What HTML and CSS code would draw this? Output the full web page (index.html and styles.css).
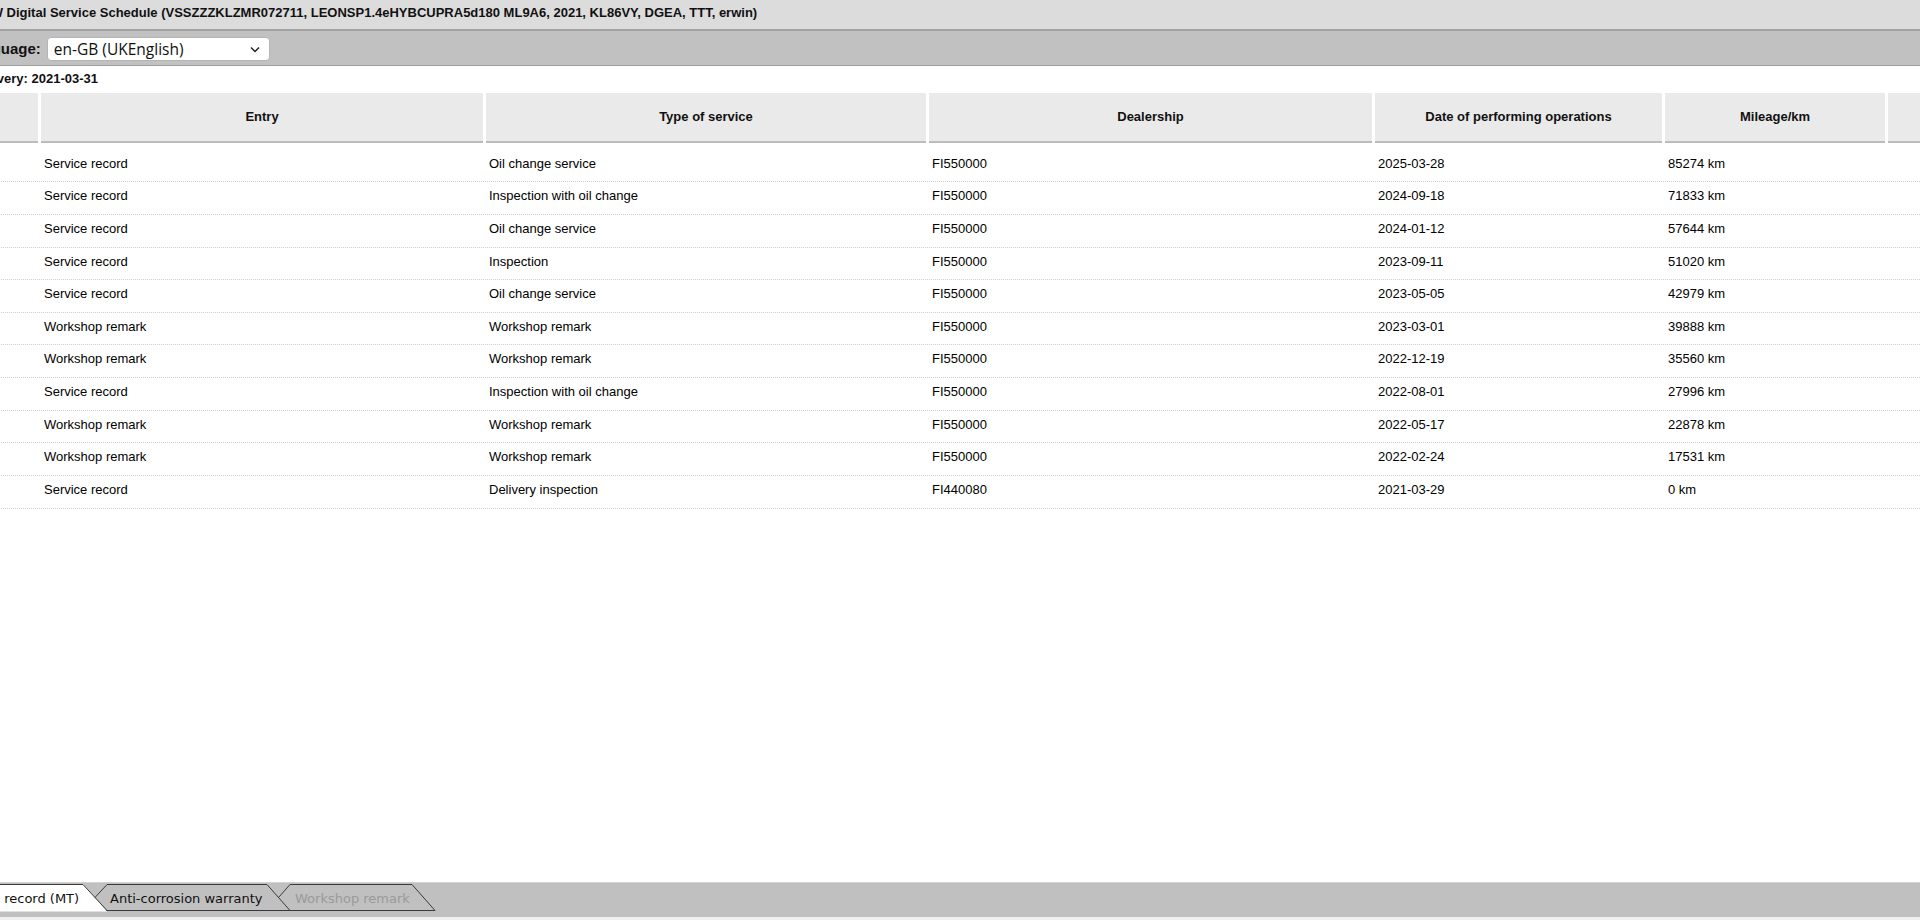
FILE: index.html
```html
<!DOCTYPE html>
<html lang="en">
<head>
    <meta charset="UTF-8">
    <meta name="viewport" content="width=device-width, initial-scale=1.0">
    <title>VW Digital Service Schedule</title>
    <link rel="stylesheet" href="styles.css">
</head>
<body>
    <div class="page">
        <div class="title-bar">VW Digital Service Schedule (VSSZZZKLZMR072711, LEONSP1.4eHYBCUPRA5d180 ML9A6, 2021, KL86VY, DGEA, TTT, erwin)</div>

        <div class="lang-bar">
            <span class="lang-label">Language:</span>
            <div class="select">
                <span>en-GB (UKEnglish)</span>
                <svg width="10" height="7" viewBox="0 0 10 7"><path d="M1 1.5 L5 5.5 L9 1.5" fill="none" stroke="#222" stroke-width="1.5"/></svg>
            </div>
        </div>

        <div class="delivery">Delivery: 2021-03-31</div>

        <div class="main">
            <div class="row head">
                <div></div>
                <div>Entry</div>
                <div>Type of service</div>
                <div>Dealership</div>
                <div>Date of performing operations</div>
                <div>Mileage/km</div>
                <div></div>
            </div>

            <div class="rows">
                <div class="row"><div></div><div>Service record</div><div>Oil change service</div><div>FI550000</div><div>2025-03-28</div><div>85274 km</div><div></div></div>
                <div class="row"><div></div><div>Service record</div><div>Inspection with oil change</div><div>FI550000</div><div>2024-09-18</div><div>71833 km</div><div></div></div>
                <div class="row"><div></div><div>Service record</div><div>Oil change service</div><div>FI550000</div><div>2024-01-12</div><div>57644 km</div><div></div></div>
                <div class="row"><div></div><div>Service record</div><div>Inspection</div><div>FI550000</div><div>2023-09-11</div><div>51020 km</div><div></div></div>
                <div class="row"><div></div><div>Service record</div><div>Oil change service</div><div>FI550000</div><div>2023-05-05</div><div>42979 km</div><div></div></div>
                <div class="row"><div></div><div>Workshop remark</div><div>Workshop remark</div><div>FI550000</div><div>2023-03-01</div><div>39888 km</div><div></div></div>
                <div class="row"><div></div><div>Workshop remark</div><div>Workshop remark</div><div>FI550000</div><div>2022-12-19</div><div>35560 km</div><div></div></div>
                <div class="row"><div></div><div>Service record</div><div>Inspection with oil change</div><div>FI550000</div><div>2022-08-01</div><div>27996 km</div><div></div></div>
                <div class="row"><div></div><div>Workshop remark</div><div>Workshop remark</div><div>FI550000</div><div>2022-05-17</div><div>22878 km</div><div></div></div>
                <div class="row"><div></div><div>Workshop remark</div><div>Workshop remark</div><div>FI550000</div><div>2022-02-24</div><div>17531 km</div><div></div></div>
                <div class="row"><div></div><div>Service record</div><div>Delivery inspection</div><div>FI440080</div><div>2021-03-29</div><div>0 km</div><div></div></div>
            </div>
        </div>

        <div class="tab-bar">
            <!-- tab outlines, drawn back to front -->
            <svg class="tab-shapes" width="520" height="35" viewBox="0 0 520 35">
                <polygon points="350,1.5 472,1.5 495,27.5 327,27.5" fill="#c0c0c0" stroke="#3a3a3a" stroke-width="1"/>
                <polygon points="167,1.5 327,1.5 350,27.5 143,27.5" fill="#c0c0c0" stroke="#3a3a3a" stroke-width="1"/>
                <polygon points="0,1 143,1 167,28.5 0,28.5" fill="#fff"/>
                <polyline points="0,1.5 143,1.5 167,27.5" fill="none" stroke="#3a3a3a" stroke-width="1"/>
            </svg>
            <div class="tab first">Service record (MT)</div>
            <div class="tab second">Anti-corrosion warranty</div>
            <div class="tab disabled">Workshop remark</div>
        </div>
        <div class="footer-strip"></div>
    </div>
</body>
</html>
```

FILE: styles.css
```css
html, body {
    margin: 0;
    height: 100%;
    overflow: hidden;
    background: #fff;
}

body {
    font-family: "Liberation Sans", Arial, sans-serif;
    color: #000;
}

/* page is scrolled a bit to the right in the original */
.page {
    margin-left: -60px;
    width: 1980px;
    height: 920px;
    display: flex;
    flex-direction: column;
}

.title-bar {
    height: 29px;
    line-height: 26px;
    padding-left: 42px;
    background: #dcdcdc;
    border-bottom: 2px solid #a2a2a2;
    font-size: 13px;
    font-weight: bold;
    color: #111;
    white-space: nowrap;
}

.lang-bar {
    height: 34px;
    display: flex;
    align-items: center;
    padding-left: 25px;
    background: #c1c1c1;
    border-bottom: 1px solid #a0a0a0;
}

.lang-label {
    font-size: 15px;
    font-weight: bold;
    color: #111;
}

.select {
    margin-left: 6px;
    margin-top: 2px;
    width: 223px;
    height: 24px;
    box-sizing: border-box;
    display: flex;
    align-items: center;
    justify-content: space-between;
    padding: 0 9px 0 6px;
    background: #fff;
    border: 1px solid #b4b4b4;
    border-radius: 4px;
    font-family: "Open Sans", "Liberation Sans", sans-serif;
    font-size: 15.5px;
    color: #111;
}

.delivery {
    height: 27px;
    line-height: 25px;
    padding-left: 33px;
    font-size: 13px;
    font-weight: bold;
    color: #111;
}

.main {
    flex: 1;
}

.row {
    display: grid;
    grid-template-columns: 98px 442px 440px 443px 287px 220px 80px;
    column-gap: 3px;
    font-size: 13px;
}

.row.head {
    height: 50px;
    font-weight: bold;
    color: #111;
}

.row.head div {
    background: #eaeaea;
    border-bottom: 2px solid #bcbcbc;
    line-height: 48px;
    text-align: center;
}

.rows {
    margin-top: 6.6px;
}

.rows .row {
    height: 32.65px;
    box-sizing: border-box;
    border-bottom: 1px dotted #d0d0d0;
}

.rows .row div {
    padding: 6px 0 0 3px;
    line-height: 15px;
}

.tab-bar {
    position: relative;
    height: 34px;
    display: flex;
    background: #c0c0c0;
    border-top: 1px solid #d2d2d2;
    font-family: "DejaVu Sans", Verdana, sans-serif;
    font-size: 13px;
    color: #111;
}

.tab-shapes {
    position: absolute;
    left: 0;
    top: 0;
}

.tab {
    position: relative;
    line-height: 31px;
    white-space: nowrap;
}

.tab.first {
    margin-left: 12px;
    width: 158px;
}

.tab.second {
    width: 185px;
}

.tab.disabled {
    color: #9a9a9a;
}

.footer-strip {
    height: 3px;
    background: #f0f0f0;
}
```
